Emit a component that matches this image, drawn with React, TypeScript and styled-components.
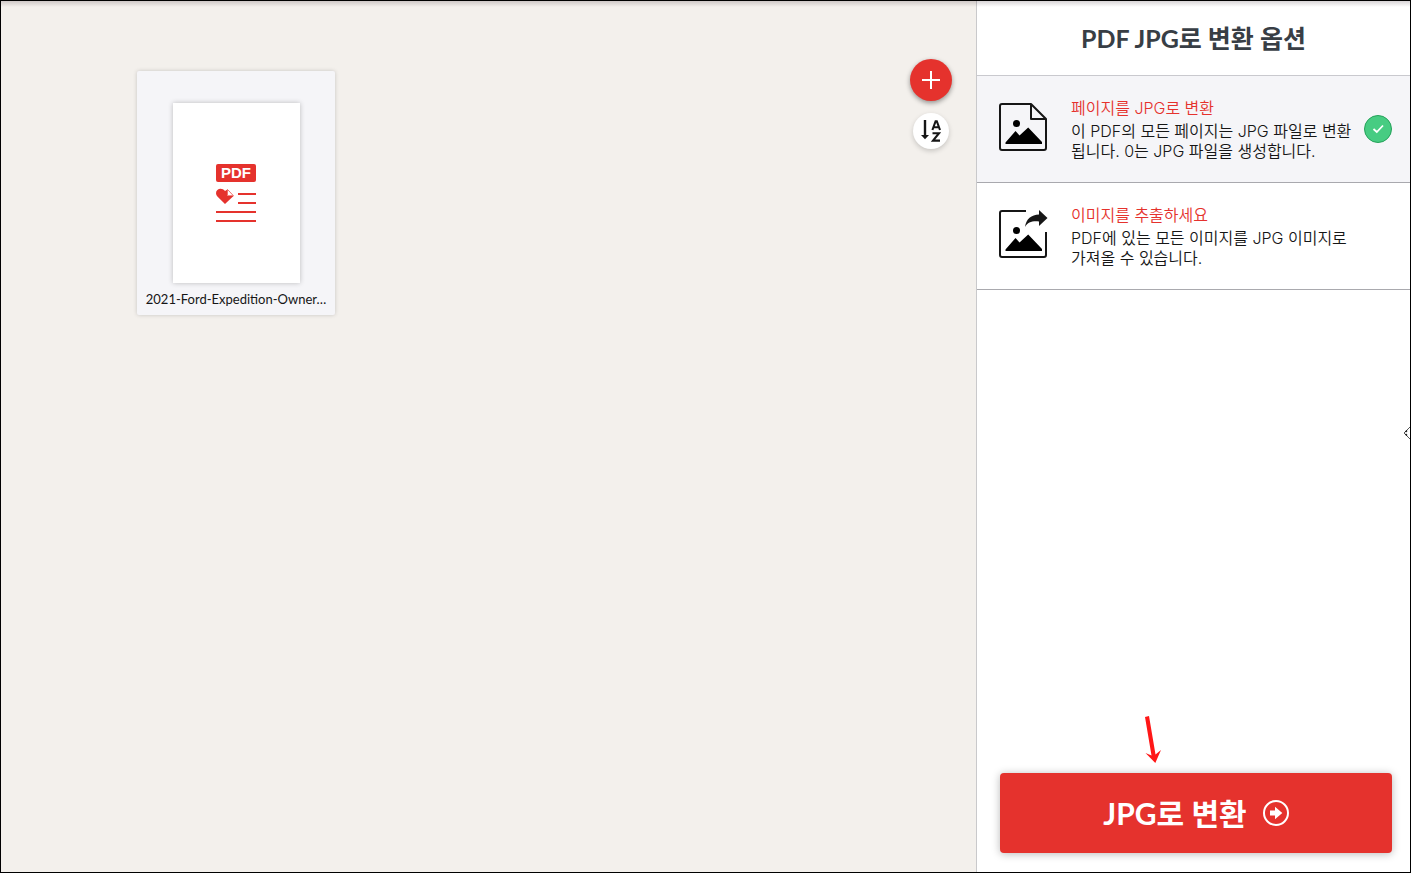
import React, { useState } from "react";
import styled, { createGlobalStyle } from "styled-components";

const font = '"Lato", "Noto Sans CJK KR", sans-serif';
const red = "#e5322d";

const GlobalStyle = createGlobalStyle`
  *, *::before, *::after { box-sizing: border-box; }
  body { margin: 0; font-family: ${font}; color: #161616; background: #fff; }
  h1, p { margin: 0; }
  button { font-family: inherit; border: 0; padding: 0; cursor: pointer; }
`;

const Page = styled.div`
  position: relative;
  display: flex;
  min-height: 100vh;
  border: 1px solid #000;
  overflow: hidden;

  &::before {
    content: "";
    position: absolute;
    inset: 0 0 auto;
    height: 6px;
    background: linear-gradient(rgba(60, 40, 50, 0.2), rgba(60, 40, 50, 0));
    pointer-events: none;
  }
`;

const Workspace = styled.main`
  flex: 1;
  display: flex;
  align-items: flex-start;
  min-width: 0;
  padding: 58px 24px 24px 136px;
  background: #f3f0ec;
`;

const FileList = styled.ul`
  flex: 1;
  display: flex;
  flex-wrap: wrap;
  gap: 16px;
  margin: 12px 0 0;
  padding: 0;
  list-style: none;
`;

const FileCard = styled.li`
  display: flex;
  flex-direction: column;
  align-items: center;
  width: 198px;
  padding: 32px 4px 8px;
  background: #f5f5f8;
  border-radius: 2px;
  box-shadow: 0 0 4px rgba(0, 0, 0, 0.18);
`;

const Thumbnail = styled.div`
  display: flex;
  align-items: center;
  justify-content: center;
  width: 127px;
  height: 180px;
  background: #fff;
  box-shadow: 0 0 5px rgba(0, 0, 0, 0.24);
`;

const FileName = styled.p`
  margin-top: 8px;
  font-size: 13px;
  line-height: 16px;
  text-align: center;
  white-space: nowrap;
`;

const Tools = styled.div`
  display: flex;
  flex-direction: column;
  align-items: center;
  gap: 12px;
`;

const RoundButton = styled.button<{ $primary?: boolean }>`
  display: flex;
  align-items: center;
  justify-content: center;
  width: ${({ $primary }) => ($primary ? 42 : 36)}px;
  height: ${({ $primary }) => ($primary ? 42 : 36)}px;
  border-radius: 50%;
  color: ${({ $primary }) => ($primary ? "#fff" : "#161616")};
  background: ${({ $primary }) => ($primary ? red : "#fff")};
  box-shadow: 0 2px 5px rgba(0, 0, 0, ${({ $primary }) => ($primary ? 0.4 : 0.18)});
`;

const Sidebar = styled.aside`
  display: flex;
  flex: 0 0 434px;
  flex-direction: column;
  border-left: 1px solid #c9c9cb;
  background: #fff;
`;

const Title = styled.h1`
  height: 75px;
  border-bottom: 1px solid #c9c9ce;
  color: #383e45;
  font-size: 25px;
  font-weight: 700;
  line-height: 74px;
  text-align: center;
`;

const Options = styled.fieldset`
  min-width: 0;
  margin: 0;
  padding: 0;
  border: 0;
`;

const Option = styled.label<{ $selected: boolean }>`
  display: flex;
  align-items: flex-start;
  height: 107px;
  padding: 22px 18px 0 22px;
  border-bottom: 1px solid #a9a9ae;
  background: ${({ $selected }) => ($selected ? "#f5f5f8" : "#fff")};
  cursor: pointer;

  > svg { flex: none; margin-top: 5px; overflow: visible; }
`;

const OptionText = styled.span`
  flex: 1;
  min-width: 0;
  margin-left: 24px;
  padding-right: 4px;
  font-family: "Inter", "Noto Sans CJK KR", sans-serif;
  font-size: 16px;
  font-weight: 350;
  line-height: 20px;
`;

const OptionName = styled.span`
  display: block;
  margin-bottom: 3px;
  color: ${red};
`;

const Tick = styled.span`
  display: grid;
  flex: none;
  width: 28px;
  height: 28px;
  margin-top: 17px;

  > * { grid-area: 1 / 1; }
`;

const Radio = styled.input`
  width: 28px;
  height: 28px;
  margin: 0;
  appearance: none;
  border-radius: 50%;
  cursor: pointer;

  &:checked { border: 1px solid #25a25a; background: #47cc82; }
`;

const Footer = styled.div`
  position: relative;
  margin-top: auto;
  padding: 19px 18px 19px 23px;
`;

const ConvertButton = styled.button`
  display: flex;
  align-items: center;
  justify-content: center;
  gap: 16px;
  width: 100%;
  height: 80px;
  border-radius: 4px;
  color: #fff;
  background: ${red};
  box-shadow: 0 1px 8px rgba(0, 0, 0, 0.28);
  font-size: 30px;
  font-weight: 700;
  line-height: 40px;
`;

const Pointer = styled.svg`
  position: absolute;
  top: -38px;
  left: 167px;
`;

const EdgeHandle = styled.svg`
  position: absolute;
  top: 425px;
  right: 0;
`;

const PdfIcon = () => (
  <svg width="40" height="58" viewBox="0 0 40 58" aria-label="PDF">
    <rect width="40" height="18" rx="2" fill={red} />
    <text x="20" y="14" fill="#fff" fontFamily="Liberation Sans, sans-serif" fontSize="15" fontWeight="700" textAnchor="middle">PDF</text>
    <path d="M9 40 1.4 32.4A4.5 4.5 0 0 1 0 29.3C0 24.8 5.8 23.2 9 27L11 25.7V32H17.5L9 40Z" fill={red} />
    <path d="M11.5 25.5 17.4 31.7H11.5Z" fill="#fff" stroke={red} strokeWidth=".7" />
    <path d="M22 30H40M22 39H40M0 48H40M0 57H40" stroke={red} strokeWidth="2" />
  </svg>
);

const Scene = () => (
  <g fill="#000">
    <circle cx="17.5" cy="20.5" r="3.5" />
    <path d="M6.5 41V39.5L16.5 28 20.5 32.5 29.2 24.5 43 39V41Z" />
  </g>
);

const PageImageIcon = () => (
  <svg width="48" height="48" viewBox="0 0 48 48" fill="none" stroke="#161616" strokeWidth="2" strokeLinejoin="round" aria-hidden="true">
    <path d="M32 1H3Q1 1 1 3V45Q1 47 3 47H45Q47 47 47 45V16L32 1V16H47" />
    <g stroke="none"><Scene /></g>
  </svg>
);

const ExtractImageIcon = () => (
  <svg width="48" height="48" viewBox="0 0 48 48" fill="none" aria-hidden="true">
    <path d="M27 1H3Q1 1 1 3V45Q1 47 3 47H45Q47 47 47 45V22" stroke="#161616" strokeWidth="2" />
    <path d="M40 0 48.5 8 40 16V11.5C33 10.8 29 12.3 26 17 27 9 32.5 4.7 40 4.5Z" fill="#161616" />
    <Scene />
  </svg>
);

const options = [
  {
    id: "pages",
    name: "페이지를 JPG로 변환",
    text: "이 PDF의 모든 페이지는 JPG 파일로 변환됩니다. 0는 JPG 파일을 생성합니다.",
    Icon: PageImageIcon,
  },
  {
    id: "extract",
    name: "이미지를 추출하세요",
    text: "PDF에 있는 모든 이미지를 JPG 이미지로 가져올 수 있습니다.",
    Icon: ExtractImageIcon,
  },
];

export default function App() {
  const [mode, setMode] = useState("pages");

  return (
    <>
      <GlobalStyle />
      <Page>
        <Workspace>
          <FileList>
            <FileCard>
              <Thumbnail><PdfIcon /></Thumbnail>
              <FileName>2021-Ford-Expedition-Owner…</FileName>
            </FileCard>
          </FileList>
          <Tools>
            <RoundButton $primary type="button" aria-label="파일 추가">
              <svg width="18" height="18" viewBox="0 0 18 18" stroke="currentColor" strokeWidth="2">
                <path d="M9 0V18M0 9H18" />
              </svg>
            </RoundButton>
            <RoundButton type="button" aria-label="정렬">
              <svg width="20" height="22" viewBox="0 0 20 22" fill="none" stroke="currentColor">
                <path d="M4 0V16" strokeWidth="2.4" />
                <path d="M0 15H8L4 19.2Z" fill="currentColor" stroke="none" />
                <path d="M11.4 10 14.6 1.2H15.8L19 10M12.6 7.2H17.8" strokeWidth="2.1" />
                <path d="M11.5 13.2H18L12 20.6H19" strokeWidth="2.1" />
              </svg>
            </RoundButton>
          </Tools>
        </Workspace>
        <Sidebar>
          <Title>PDF JPG로 변환 옵션</Title>
          <Options aria-label="변환 옵션">
            {options.map(({ id, name, text, Icon }) => (
              <Option key={id} $selected={mode === id}>
                <Icon />
                <OptionText>
                  <OptionName>{name}</OptionName>
                  {text}
                </OptionText>
                <Tick>
                  <Radio type="radio" name="mode" value={id} checked={mode === id} onChange={() => setMode(id)} />
                  {mode === id && (
                    <svg width="28" height="28" viewBox="0 0 28 28" fill="none" stroke="#fff" strokeWidth="1.8" aria-hidden="true">
                      <path d="M9.5 14 12.8 17 19 10.5" />
                    </svg>
                  )}
                </Tick>
              </Option>
            ))}
          </Options>
          <Footer>
            <Pointer width="18" height="48" viewBox="0 0 18 48" fill="#ff1717" aria-hidden="true">
              <path d="M1 1 5 0 11.5 38.5 17 34 11.3 47 1.5 37 7.5 39.5Z" />
            </Pointer>
            <ConvertButton type="button">
              JPG로 변환
              <svg width="26" height="26" viewBox="0 0 26 26" fill="none" aria-hidden="true">
                <circle cx="13" cy="13" r="12" stroke="currentColor" strokeWidth="2" />
                <path d="M7 10.5H12V6.7L19.3 13 12 19.3V15.5H7Z" fill="currentColor" />
              </svg>
            </ConvertButton>
          </Footer>
        </Sidebar>
        <EdgeHandle width="7" height="14" viewBox="0 0 7 14" fill="none" aria-hidden="true">
          <path d="M7 1 1 7 7 13" stroke="#555" />
          <path d="M2.5 6 4 4.5M2.5 8 4 9.5" stroke="#161616" strokeWidth="1.5" />
        </EdgeHandle>
      </Page>
    </>
  );
}
